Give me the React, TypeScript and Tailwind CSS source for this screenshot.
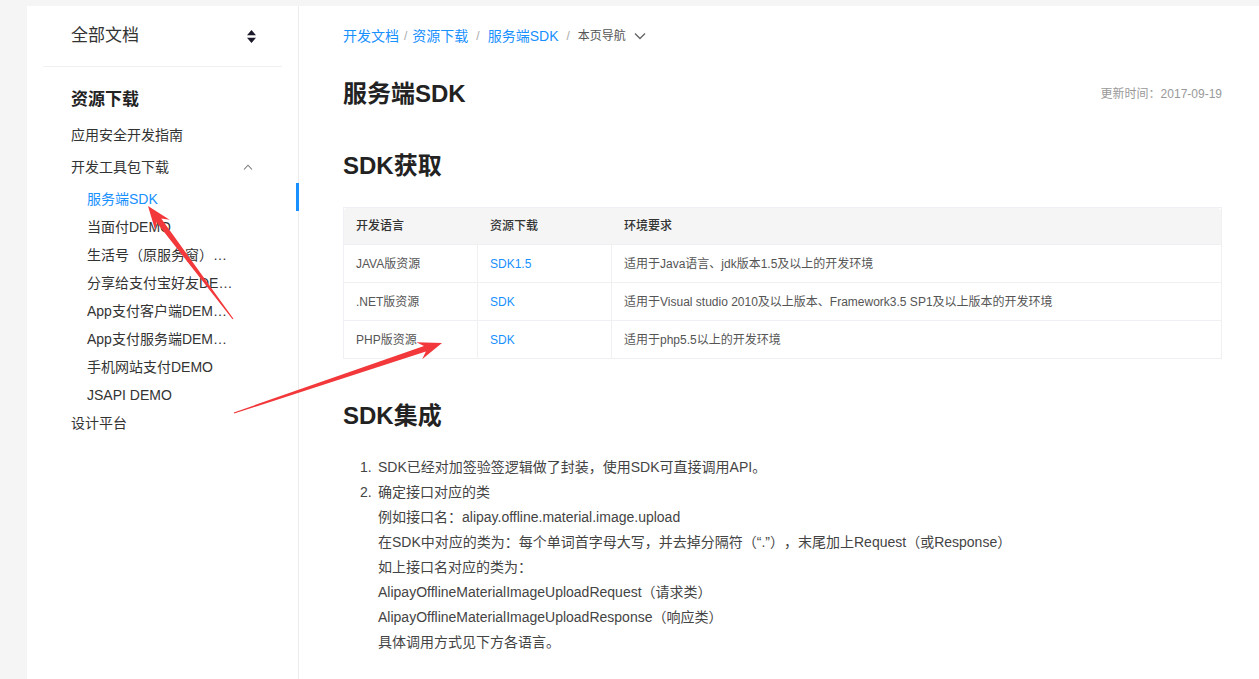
const subItems = [
  "服务端SDK",
  "当面付DEMO",
  "生活号（原服务窗）…",
  "分享给支付宝好友DE…",
  "App支付客户端DEM…",
  "App支付服务端DEM…",
  "手机网站支付DEMO",
  "JSAPI DEMO",
];

const rows = [
  ["JAVA版资源", "SDK1.5", "适用于Java语言、jdk版本1.5及以上的开发环境"],
  [".NET版资源", "SDK", "适用于Visual studio 2010及以上版本、Framework3.5 SP1及以上版本的开发环境"],
  ["PHP版资源", "SDK", "适用于php5.5以上的开发环境"],
];

const steps = [
  "例如接口名：alipay.offline.material.image.upload",
  "在SDK中对应的类为：每个单词首字母大写，并去掉分隔符（“.”），末尾加上Request（或Response）",
  "如上接口名对应的类为：",
  "AlipayOfflineMaterialImageUploadRequest（请求类）",
  "AlipayOfflineMaterialImageUploadResponse（响应类）",
  "具体调用方式见下方各语言。",
];

function arrowPoints(x1: number, y1: number, x2: number, y2: number) {
  const dx = x2 - x1;
  const dy = y2 - y1;
  const len = Math.hypot(dx, dy);
  const ux = dx / len;
  const uy = dy / len;
  const nx = -uy;
  const ny = ux;
  const p = (d: number, w: number) => `${x2 - ux * d + nx * w},${y2 - uy * d + ny * w}`;
  return [
    p(len, 0.6),
    p(18, 3),
    p(24, 9),
    p(0, 0),
    p(24, -9),
    p(18, -3),
    p(len, -0.6),
  ].join(" ");
}

function Sidebar() {
  return (
    <aside className="relative w-[272px] shrink-0 border-r border-[#ececec] bg-white">
      <div className="mx-4 flex h-[61px] items-center justify-between border-b border-[#f0f0f0] pl-7 pr-[26px]">
        <span className="text-[17px] text-[#333]">全部文档</span>
        <svg width="9" height="13" viewBox="0 0 9 13" className="text-[#1a1a2a]">
          <path d="M4.5 0 L9 5.2 H0 Z M0 7.8 H9 L4.5 13 Z" fill="currentColor" />
        </svg>
      </div>
      <div className="pt-5 pl-11 pr-[44px] text-sm text-[#333]">
        <div className="flex h-[26px] items-center text-[17px] font-bold text-[#222]">资源下载</div>
        <div className="mt-[6px] flex h-8 items-center">应用安全开发指南</div>
        <div className="flex h-8 items-center justify-between">
          <span>开发工具包下载</span>
          <svg width="10" height="6" viewBox="0 0 10 6" className="mr-[1px]">
            <path d="M1 5.5 L5 1.2 L9 5.5" fill="none" stroke="#777" strokeWidth="1.1" />
          </svg>
        </div>
        <div className="pt-[2px]">
          {subItems.map((item, i) => (
            <div
              key={item}
              className={
                "flex h-7 items-center pl-4 whitespace-nowrap " +
                (i === 0 ? "text-[#1890ff]" : "text-[#333]")
              }
            >
              {item}
            </div>
          ))}
        </div>
        <div className="flex h-7 items-center">设计平台</div>
      </div>
      <div className="absolute right-[-1px] top-[177px] h-[28px] w-[3px] bg-[#1890ff]" />
    </aside>
  );
}

export default function App() {
  return (
    <div
      className="relative flex min-h-screen bg-[#f5f5f5] pt-[6px] pl-[27px] [text-spacing-trim:space-all]"
      style={{ fontFamily: '"Liberation Sans", "Noto Sans CJK SC", sans-serif' }}
    >
      <Sidebar />
      <main className="flex-1 bg-white pl-11 pr-[37px] pt-5">
        <nav className="flex h-5 items-center text-sm">
          <span className="text-[#1890ff]">开发文档</span>
          <span className="px-[5px] text-xs text-[#aaa]">/</span>
          <span className="text-[#1890ff]">资源下载</span>
          <span className="px-[8px] text-xs text-[#aaa]">/</span>
          <span className="text-[#1890ff]">服务端SDK</span>
          <span className="px-[8px] text-xs text-[#aaa]">/</span>
          <span className="text-xs text-[#555]">本页导航</span>
          <svg width="12" height="8" viewBox="0 0 12 8" className="ml-2">
            <path d="M1 1.5 L6 6.5 L11 1.5" fill="none" stroke="#666" strokeWidth="1.4" />
          </svg>
        </nav>

        <div className="mt-8 flex h-8 items-center justify-between">
          <h1 className="text-2xl font-bold text-[#222]">服务端SDK</h1>
          <span className="text-xs text-[#999]">更新时间：2017-09-19</span>
        </div>

        <h2 className="mt-10 flex h-8 items-center text-2xl font-bold text-[#222]">SDK获取</h2>

        <div className="mt-[25px] border border-[#eef0f3] text-xs">
          <div className="grid h-[36px] grid-cols-[134px_134px_1fr] items-center rounded-t bg-[#f5f5f5] font-medium text-[#333]">
            <div className="pl-3">开发语言</div>
            <div className="pl-3">资源下载</div>
            <div className="pl-3">环境要求</div>
          </div>
          {rows.map(([lang, link, env]) => (
            <div
              key={lang}
              className="grid h-[38px] grid-cols-[134px_134px_1fr] border-t border-[#eef0f3] text-[#555]"
            >
              <div className="flex items-center border-r border-[#eef0f3] pl-3">{lang}</div>
              <div className="flex items-center border-r border-[#eef0f3] pl-3 text-[#1890ff]">{link}</div>
              <div className="flex items-center pl-3">{env}</div>
            </div>
          ))}
        </div>

        <h2 className="mt-[41px] flex h-8 items-center text-2xl font-bold text-[#222]">SDK集成</h2>

        <ol className="mt-[23px] text-sm leading-[25px] text-[#444]">
          <li className="flex">
            <span className="w-[35px] pl-[17px]">1.</span>
            <span>SDK已经对加签验签逻辑做了封装，使用SDK可直接调用API。</span>
          </li>
          <li className="flex">
            <span className="w-[35px] pl-[17px]">2.</span>
            <div>
              <div>确定接口对应的类</div>
              {steps.map((s) => (
                <div key={s}>{s}</div>
              ))}
            </div>
          </li>
        </ol>
      </main>

      <svg className="pointer-events-none absolute left-0 top-0" width="1259" height="679">
        <polygon points={arrowPoints(233, 319, 148, 206)} fill="#f2383a" />
        <polygon points={arrowPoints(234, 413, 442, 343)} fill="#f2383a" />
      </svg>
    </div>
  );
}
